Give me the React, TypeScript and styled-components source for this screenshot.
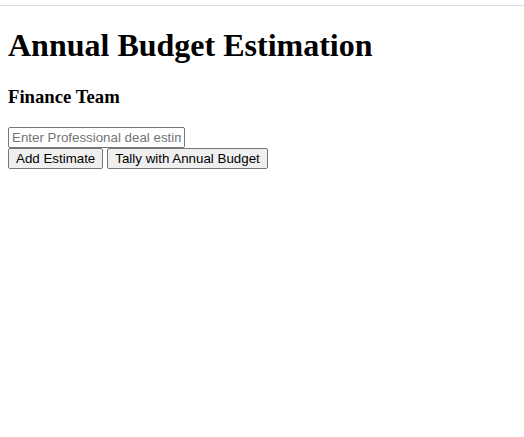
import React, { useState } from "react";
import styled, { createGlobalStyle } from "styled-components";

const GlobalStyle = createGlobalStyle`
  body {
    margin: 0;
    background: #ffffff;
    color: #000000;
    font-family: "Liberation Serif", "Times New Roman", serif;
    font-size: 16px;
  }
`;

const Page = styled.main`
  margin-top: 5px;
  border-top: 1px solid #dadce0;
  padding: 20px 8px 8px;
`;

const Title = styled.h1`
  margin: 0 0 22px;
  font-size: 32px;
  line-height: 38px;
  font-weight: bold;
`;

const Subtitle = styled.h3`
  margin: 0 0 20px;
  line-height: 21px;
  font-weight: bold;
`;

const EstimateForm = styled.form`
  display: flex;
  flex-direction: column;
  align-items: flex-start;
`;

const EstimateInput = styled.input`
  box-sizing: border-box;
  width: 177px;
  height: 21px;
  padding: 1px 3px;
  border: 1px solid #767676;
  border-radius: 2px;
  background: #ffffff;
  font-family: "Liberation Sans", Arial, sans-serif;

  &::placeholder {
    color: #757575;
  }
`;

const Actions = styled.div`
  display: flex;
  flex-wrap: wrap;
  gap: 4px;
`;

const ActionButton = styled.button`
  box-sizing: border-box;
  height: 21px;
  padding: 0 7px;
  border: 1px solid #767676;
  border-radius: 2px;
  background: #efefef;
  color: #000000;
  font-family: "Liberation Sans", Arial, sans-serif;
  white-space: nowrap;
`;

export default function App() {
  const [estimate, setEstimate] = useState("");

  return (
    <>
      <GlobalStyle />
      <Page>
        <Title>Annual Budget Estimation</Title>
        <Subtitle>Finance Team</Subtitle>
        <EstimateForm onSubmit={(event) => event.preventDefault()}>
          <EstimateInput
            type="text"
            aria-label="Professional deal estimate"
            placeholder="Enter Professional deal estimate"
            value={estimate}
            onChange={(event) => setEstimate(event.target.value)}
          />
          <Actions>
            <ActionButton type="submit">Add Estimate</ActionButton>
            <ActionButton type="button">Tally with Annual Budget</ActionButton>
          </Actions>
        </EstimateForm>
      </Page>
    </>
  );
}
